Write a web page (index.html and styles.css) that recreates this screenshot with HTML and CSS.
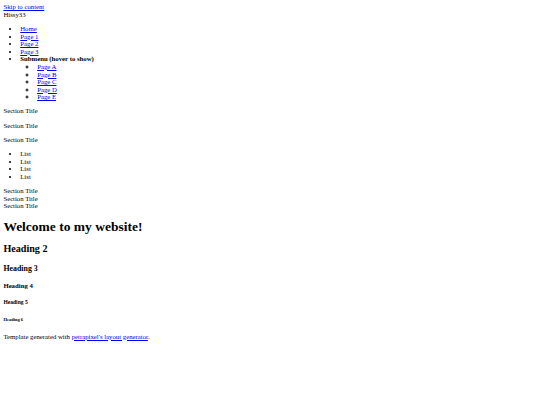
FILE: index.html
```html
<!DOCTYPE html>
<html lang="en">
<head>
<meta charset="utf-8">
<title>Hissy33</title>
<link rel="stylesheet" href="styles.css">
</head>
<body class="page">
<a class="skip-link" href="#content">Skip to content</a>
<header class="site-header">
  <div class="site-name">Hissy33</div>
  <nav class="site-nav">
    <ul class="nav-list">
      <li><a href="#">Home</a></li>
      <li><a href="#">Page 1</a></li>
      <li><a href="#">Page 2</a></li>
      <li><a href="#">Page 3</a></li>
      <li><strong class="submenu-title">Submenu (hover to show)</strong>
        <ul class="submenu">
          <li><a href="#">Page A</a></li>
          <li><a href="#">Page B</a></li>
          <li><a href="#">Page C</a></li>
          <li><a href="#">Page D</a></li>
          <li><a href="#">Page E</a></li>
        </ul>
      </li>
    </ul>
  </nav>
</header>
<aside class="sidebar">
  <p>Section Title</p>
  <p>Section Title</p>
  <p>Section Title</p>
  <ul class="side-list">
    <li>List</li>
    <li>List</li>
    <li>List</li>
    <li>List</li>
  </ul>
  <div>Section Title</div>
  <div>Section Title</div>
  <div>Section Title</div>
</aside>
<main id="content" class="main">
  <h1>Welcome to my website!</h1>
  <h2>Heading 2</h2>
  <h3>Heading 3</h3>
  <h4>Heading 4</h4>
  <h5>Heading 5</h5>
  <h6>Heading 6</h6>
</main>
<footer class="site-footer">
  <p>Template generated with <a href="#">petrapixel's layout generator</a>.</p>
</footer>
</body>
</html>
```
FILE: styles.css
```css
html {
  font-size: 6.75px;
}
.page {
  margin: 0.5em;
  font-family: "Liberation Serif", "Times New Roman", serif;
  font-size: 1rem;
  line-height: 1.12;
  color: #000;
  background: #fff;
}
.page a {
  color: #0000ee;
}
.nav-list,
.submenu,
.side-list {
  padding-left: 2.5em;
}
.main h2,
.main h3,
.main h4,
.main h5,
.main h6 {
  line-height: 1.2;
}
```
